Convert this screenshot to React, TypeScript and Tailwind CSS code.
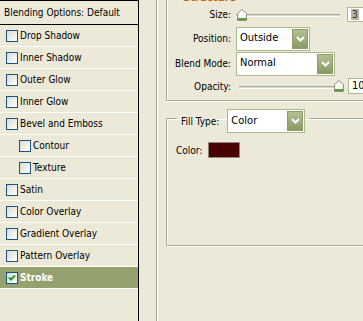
import { ReactNode } from 'react';

const font = 'font-["DejaVu_Sans_Condensed","DejaVu_Sans",sans-serif] font-stretch-condensed text-[10px]';

const Check = ({ checked = false }: { checked?: boolean }) => (
  <span className="flex h-[12px] w-[12px] shrink-0 items-center justify-center border border-[#1c5180] bg-gradient-to-br from-[#dcdbd2] to-white">
    {checked && (
      <svg width="8" height="8" viewBox="0 0 8 8">
        <path d="M1 3.5 L3 5.5 L7 1.5" fill="none" stroke="#21a121" strokeWidth="2" />
      </svg>
    )}
  </span>
);

const effects: { name: string; indent?: boolean; selected?: boolean }[] = [
  { name: 'Drop Shadow' },
  { name: 'Inner Shadow' },
  { name: 'Outer Glow' },
  { name: 'Inner Glow' },
  { name: 'Bevel and Emboss' },
  { name: 'Contour', indent: true },
  { name: 'Texture', indent: true },
  { name: 'Satin' },
  { name: 'Color Overlay' },
  { name: 'Gradient Overlay' },
  { name: 'Pattern Overlay' },
  { name: 'Stroke', selected: true },
];

const Chevron = () => (
  <span className="flex h-[20px] w-[16px] items-center justify-center border border-[#8c9c6a] bg-gradient-to-b from-[#b3c092] to-[#8a9a64]">
    <svg width="9" height="6" viewBox="0 0 9 6">
      <path d="M1 1 L4.5 4.5 L8 1" fill="none" stroke="white" strokeWidth="2" />
    </svg>
  </span>
);

const Dropdown = ({ value, width }: { value: string; width: string }) => (
  <div className={`flex h-[24px] items-center justify-between border border-[#a9ba8c] bg-white p-[1px] pl-[3px] ${width}`}>
    <span className="text-[11px]">{value}</span>
    <Chevron />
  </div>
);

const Thumb = () => (
  <svg width="10" height="12" viewBox="0 0 10 12" className="shrink-0">
    <path d="M0.5 4.5 L5 0.5 L9.5 4.5 V11.5 H0.5 Z" fill="#fbfbf8" stroke="#8f8e80" />
    <rect x="1" y="9" width="8" height="2" fill="#4fa33a" />
  </svg>
);

const Row = ({ label, h, children }: { label: string; h: string; children: ReactNode }) => (
  <div className={`flex items-center ${h}`}>
    <span className="w-[64px] text-right">{label}</span>
    <div className="ml-[5px] flex items-center">{children}</div>
  </div>
);

export default function App() {
  return (
    <div className={`flex h-[321px] w-[363px] overflow-hidden bg-[#ece9d8] text-black ${font}`}>
      <div className="w-[139px] shrink-0 border-r border-t border-black">
        <div className="flex h-[24px] items-center border-b border-black pl-[4px]">Blending Options: Default</div>
        {effects.map((e) => (
          <div
            key={e.name}
            className={`flex h-[22px] items-center gap-[2px] border-b border-white ${e.indent ? 'pl-[19px]' : 'pl-[6px]'} ${
              e.selected ? 'bg-[#95a26f] font-bold text-white' : ''
            }`}
          >
            <Check checked={e.selected} />
            <span>{e.name}</span>
          </div>
        ))}
      </div>

      <div className="w-[17px] shrink-0" />

      <div className="flex-1 border-l border-[#aca899] pl-[9px] shadow-[inset_1px_0_0_#fff]">
        <div className="flex h-[101px] w-[220px] flex-col border-b border-l border-[#aca899] shadow-[inset_1px_0_0_#fff,0_1px_0_#fff]">
          <div className="-mt-[8px] ml-[16px] h-[11px] text-[11px] font-bold leading-[11px] text-[#bf5f0b]">Structure</div>
          <Row label="Size:" h="h-[23px]">
            <div className="relative flex w-[104px] items-center">
              <div className="absolute left-0 right-0 top-[5px] h-[3px] border-t border-[#aca899] bg-[#dcdad0] border-b border-b-white" />
              <div className="relative ml-[1px]"><Thumb /></div>
            </div>
            <div className="ml-[7px] flex h-[15px] w-[30px] items-center border border-[#a9ba8c] bg-white pl-[3px]">
              <span className="bg-[#bab59f] px-[1px] leading-[11px] text-[#333]">3</span>
            </div>
          </Row>
          <Row label="Position:" h="h-[25px]">
            <Dropdown value="Outside" width="w-[74px]" />
          </Row>
          <Row label="Blend Mode:" h="h-[25px]">
            <Dropdown value="Normal" width="w-[99px]" />
          </Row>
          <Row label="Opacity:" h="h-[20px]">
            <div className="relative ml-[3px] flex w-[102px] items-center justify-end">
              <div className="absolute left-0 right-0 top-[6px] h-[3px] border-t border-[#aca899] bg-[#dcdad0] border-b border-b-white" />
              <div className="relative mr-[-3px]"><Thumb /></div>
            </div>
            <div className="ml-[7px] flex h-[16px] w-[30px] items-center border border-[#a9ba8c] bg-white pl-[3px] text-[11px]">100</div>
          </Row>
        </div>

        <fieldset className="mt-[2px] h-[143px] w-[220px] border border-[#aca899] pl-[9px] shadow-[inset_1px_1px_0_#fff,1px_1px_0_#fff]">
          <legend className="ml-[1px] flex items-center gap-[8px] px-[4px] pt-[6px]">
            <span>Fill Type:</span>
            <Dropdown value="Color" width="w-[78px]" />
          </legend>
          <div className="mt-[9px] flex items-center gap-[6px]">
            <span>Color:</span>
            <span className="h-[16px] w-[32px] border border-[#8a8a80] bg-[#4a0000]" />
          </div>
        </fieldset>
      </div>
    </div>
  );
}
